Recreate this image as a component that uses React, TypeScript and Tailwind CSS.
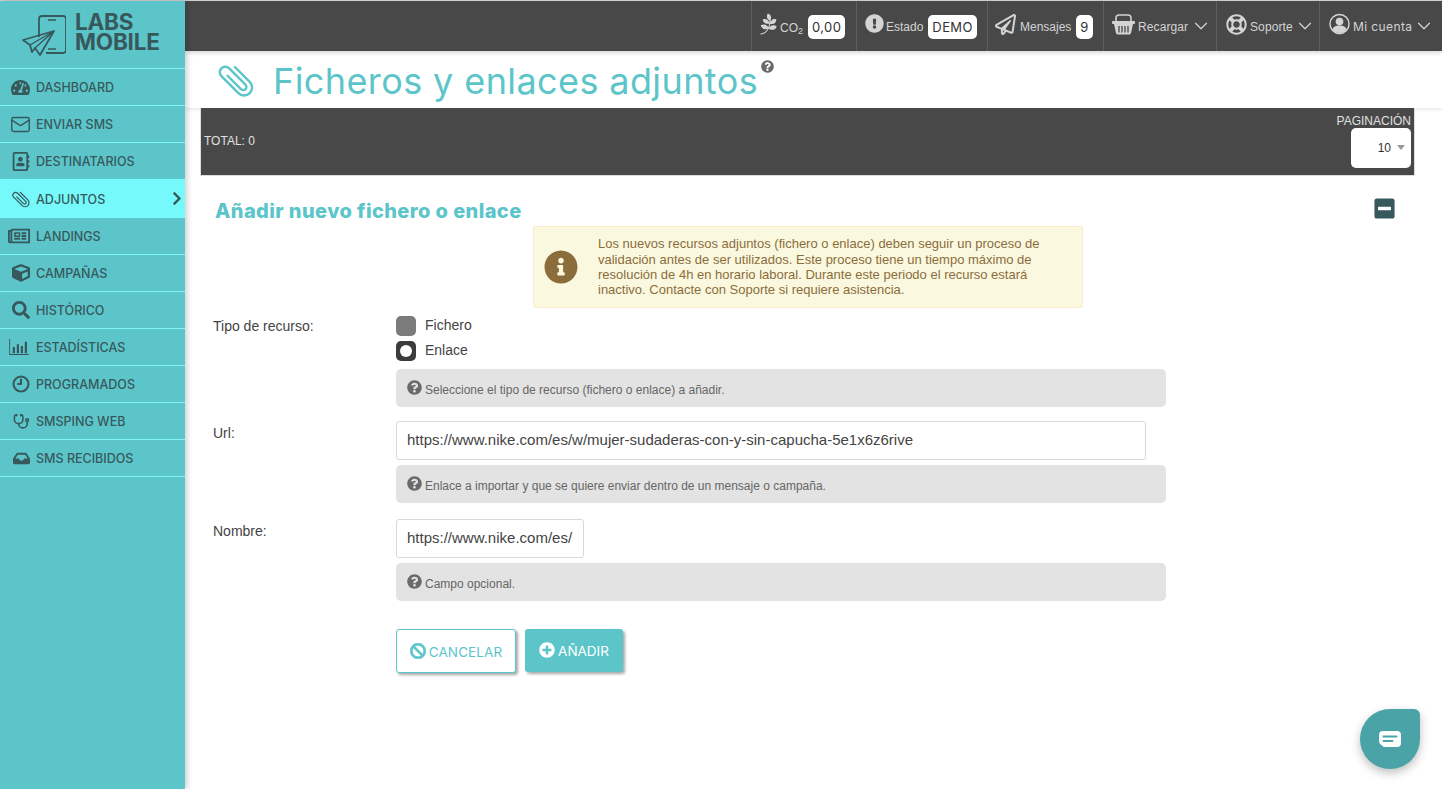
import { ChevronDown, Clock9, Mail, Stethoscope } from "lucide-react";
import {
  FaPagelines,
  FaExclamationCircle,
  FaRegPaperPlane,
  FaRegLifeRing,
  FaTachometerAlt,
  FaRegAddressBook,
  FaRegNewspaper,
  FaCube,
  FaSearch,
  FaInbox,
  FaChevronRight,
  FaInfoCircle,
  FaQuestionCircle,
  FaBan,
  FaPlusCircle,
  FaMinusSquare,
} from "react-icons/fa";

function ClipIcon({ className = "" }: { className?: string }) {
  return (
    <svg viewBox="0 0 36 36" fill="none" stroke="currentColor" strokeWidth="2.4" strokeLinecap="round" className={className}>
      <g transform="rotate(-45 18 18)">
        <path d="M15 9v19a3.200 3.200 0 0 0 6.400 0V5a5.500 5.500 0 0 0-11 0v24a8 8 0 0 0 16 0V8" />
      </g>
    </svg>
  );
}

function BarsIcon({ className = "" }: { className?: string }) {
  return (
    <svg viewBox="0 0 22 18" fill="currentColor" className={className}>
      <path d="M0 0h1v17h21v1H0z" />
      <path d="M4 9h2.500v7H4zM8.500 6H11v10H8.500zM13 8h2.500v8H13zM17.500 3H20v13h-2.500z" />
    </svg>
  );
}

const menu = [
  { label: "DASHBOARD", icon: <FaTachometerAlt className="h-[19px] w-[19px]" /> },
  { label: "ENVIAR SMS", icon: <Mail className="h-[21px] w-[21px] -mr-px" strokeWidth={1.6} /> },
  { label: "DESTINATARIOS", icon: <FaRegAddressBook className="h-[19px] w-[18px]" /> },
  { label: "ADJUNTOS", icon: <ClipIcon className="h-[18px] w-[18px]" />, active: true },
  { label: "LANDINGS", icon: <FaRegNewspaper className="h-[20px] w-[22px]" /> },
  { label: "CAMPAÑAS", icon: <FaCube className="h-[18px] w-[18px]" /> },
  { label: "HISTÓRICO", icon: <FaSearch className="h-[18px] w-[18px]" /> },
  { label: "ESTADÍSTICAS", icon: <BarsIcon className="h-[16px] w-[22px]" /> },
  { label: "PROGRAMADOS", icon: <Clock9 className="h-[18px] w-[18px]" strokeWidth={2.8} /> },
  { label: "SMSPING WEB", icon: <Stethoscope className="h-[17px] w-[17px]" strokeWidth={2.2} /> },
  { label: "SMS RECIBIDOS", icon: <FaInbox className="h-[17px] w-[17px]" /> },
];

function Logo() {
  return (
    <div className="flex h-[67px] items-center pl-[22px]">
      <svg width="44" height="42" viewBox="0 0 44 42" fill="none" stroke="#37595c" strokeWidth="1.800" strokeLinejoin="round" className="mt-[2px] shrink-0">
        <path d="M17 22V4a3 3 0 0 1 3-3h21a3 3 0 0 1 3 3v31a3 3 0 0 1-3 3H24" />
        <path d="M26 5h8M26 34h8" strokeWidth="1.300" />
        <path d="M1 25 32 16 18 40 13 33 10 37 8 30Z" />
        <path d="M8 30 32 16M13 33 32 16" strokeWidth="1.400" />
      </svg>
      <div className="mb-[5px] ml-[9px] font-['Inter',sans-serif] text-[22.5px] font-bold leading-[20px] tracking-[-0.2px] text-[#37595c]">
        LABS
        <br />
        MOBILE
      </div>
    </div>
  );
}

function Sidebar() {
  return (
    <aside className="relative z-20 w-[185px] shrink-0 bg-[#5cc5c9] shadow-[2px_0_6px_rgba(0,0,0,0.2)]">
      <Logo />
      <nav className="border-t border-[#7ff5f8] font-['Inter',sans-serif] text-[12.5px] font-medium text-[#37595c]">
        {menu.map((item) =>
          item.active ? (
            <a key={item.label} className="-mt-px flex h-[39px] items-center bg-[#75f9fb]">
              <span className="flex w-[36px] shrink-0 justify-end pr-[6px]">{item.icon}</span>
              <span className="flex-1 pt-[4px]">{item.label}</span>
              <FaChevronRight className="mr-[3px] h-[15px] w-[10px]" />
            </a>
          ) : (
            <a key={item.label} className="flex h-[37px] items-center border-b border-[#7ff5f8]">
              <span className="flex w-[36px] shrink-0 justify-end pr-[6px]">{item.icon}</span>
              <span className="pt-[2px]">{item.label}</span>
            </a>
          ),
        )}
      </nav>
    </aside>
  );
}

function BasketIcon() {
  return (
    <svg width="23" height="22" viewBox="0 0 23 22" className="mb-[4px] shrink-0" fill="#d4d4d4">
      <path d="M4 9V5a3 3 0 0 1 3-3h9a3 3 0 0 1 3 3v4" fill="none" stroke="#d4d4d4" strokeWidth="1.500" />
      <rect x="0" y="8" width="23" height="3" rx="1" />
      <path d="M2 11h19l-2 9a2 2 0 0 1-2 1.500H6A2 2 0 0 1 4 20z" />
      <path d="M7 13v6.500M10 13v6.500M13 13v6.500M16 13v6.500" stroke="#484848" strokeWidth="1.300" />
    </svg>
  );
}

function UserIcon() {
  return (
    <svg width="21" height="22" viewBox="0 0 22 22" className="mb-[4px] shrink-0" fill="#d4d4d4">
      <circle cx="11" cy="11" r="10" fill="none" stroke="#d4d4d4" strokeWidth="1.500" />
      <circle cx="11" cy="8.500" r="4" />
      <path d="M3.500 17c1-3.500 3.500-4.500 7.500-4.500s6.500 1 7.500 4.500a10 10 0 0 1-15 0z" />
    </svg>
  );
}

function TopItem({ children, className = "" }: { children: React.ReactNode; className?: string }) {
  return (
    <div className={`flex h-full items-center border-l border-[#5e5e5e] text-[12px] text-[#d4d4d4] ${className}`}>
      {children}
    </div>
  );
}

function Badge({ children }: { children: React.ReactNode }) {
  return (
    <span className="ml-[5px] mt-[2px] rounded-[5px] bg-white px-[4px] py-[3px] font-['Inter',sans-serif] text-[13px] leading-[18px] tracking-[0.4px] text-[#333]">
      {children}
    </span>
  );
}

function Topbar() {
  return (
    <header className="relative z-10 flex h-[50px] justify-end bg-[#484848] pr-[3px] shadow-[0_2px_4px_rgba(0,0,0,0.15)]">
      <TopItem className="w-[105px] pl-[7px]">
        <FaPagelines className="mb-[5px] h-[22px] w-[19px]" />
        <span className="ml-[2px] mt-[4px]">
          CO<sub className="text-[9px]">2</sub>
        </span>
        <Badge>0,00</Badge>
      </TopItem>
      <TopItem className="w-[131px] pl-[8px]">
        <FaExclamationCircle className="mb-[5px] h-[19px] w-[19px]" />
        <span className="ml-[2px] mt-[2px]">Estado</span>
        <Badge>DEMO</Badge>
      </TopItem>
      <TopItem className="w-[116px] pl-[7px]">
        <FaRegPaperPlane className="mb-[4px] h-[21px] w-[21px]" />
        <span className="ml-[4px] mt-[2px]">Mensajes</span>
        <Badge>9</Badge>
      </TopItem>
      <TopItem className="w-[113px] pl-[8px]">
        <BasketIcon />
        <span className="ml-[3px] mt-[2px] tracking-[0.1px]">Recargar</span>
        <ChevronDown className="ml-[2px] h-[22px] w-[22px]" strokeWidth={1.300} />
      </TopItem>
      <TopItem className="w-[103px] pl-[9px]">
        <FaRegLifeRing className="mb-[4px] h-[21px] w-[21px]" />
        <span className="ml-[3px] mt-[2px] tracking-[0.1px]">Soporte</span>
        <ChevronDown className="ml-[1px] h-[22px] w-[22px]" strokeWidth={1.300} />
      </TopItem>
      <TopItem className="w-[120px] pl-[9px]">
        <UserIcon />
        <span className="ml-[3px] mt-[2px] font-['Inter',sans-serif] tracking-[0.4px]">Mi cuenta</span>
        <ChevronDown className="ml-[1px] h-[22px] w-[22px]" strokeWidth={1.300} />
      </TopItem>
    </header>
  );
}

function Help({ children }: { children: React.ReactNode }) {
  return (
    <div className="mt-[5px] flex h-[38px] w-[770px] items-center rounded-[5px] bg-[#e3e3e3] pl-[11px] text-[12px] text-[#666]">
      <FaQuestionCircle className="mb-[2px] mr-[3px] h-[15px] w-[15px] text-[#6a6a6a]" />
      <span className="pt-[3px]">{children}</span>
    </div>
  );
}

function Row({ label, className = "", labelClass = "pt-[2px]", children }: { label: string; className?: string; labelClass?: string; children: React.ReactNode }) {
  return (
    <div className={`flex ${className}`}>
      <label className={`w-[183px] shrink-0 text-[14px] leading-[20px] text-[#444] ${labelClass}`}>{label}</label>
      <div>{children}</div>
    </div>
  );
}

function Radio({ label, checked }: { label: string; checked?: boolean }) {
  return (
    <div className="flex h-[25px] items-center">
      {checked ? (
        <span className="flex h-[20px] w-[20px] items-center justify-center rounded-[5px] bg-[#3c3c3c]">
          <span className="h-[12px] w-[12px] rounded-full bg-white" />
        </span>
      ) : (
        <span className="h-[20px] w-[20px] rounded-[5px] bg-[#7b7b7b]" />
      )}
      <span className="ml-[9px] text-[14px] text-[#444]">{label}</span>
    </div>
  );
}

export default function App() {
  return (
    <div className="flex h-screen overflow-hidden bg-[#d2d2d2] pt-px font-['Liberation_Sans',Arial,sans-serif]">
      <Sidebar />
      <main className="relative min-w-0 flex-1 bg-white">
        <Topbar />
        <div className="flex h-[57px] items-center bg-white pl-[33px] shadow-[0_1px_4px_rgba(0,0,0,0.12)]">
          <ClipIcon className="h-[36px] w-[36px] text-[#5cc5c9]" />
          <h1 className="ml-[19px] mt-[2px] font-['Inter',sans-serif] text-[36px] font-normal tracking-[0.4px] text-[#5cc5c9]">
            Ficheros y enlaces adjuntos
          </h1>
          <FaQuestionCircle className="mb-[26px] ml-[3px] h-[13px] w-[13px] text-[#6a6a6a]" />
        </div>

        <div className="ml-[15px] mr-[27px] flex h-[68px] items-center justify-between border-x border-b border-[#dcdcdc] bg-[#484848] pl-[3px] pr-[3px] text-[#e0e0e0]">
          <span className="mb-[2px] text-[12px]">TOTAL: 0</span>
          <div className="mb-[2px] flex flex-col items-end">
            <span className="text-[12px] leading-[14px]">PAGINACIÓN</span>
            <div className="flex h-[40px] w-[60px] items-center justify-end rounded-[5px] bg-white pr-[6px] text-[12px] text-[#333]">
              10
              <span className="ml-[6px] h-0 w-0 border-x-[4px] border-t-[5px] border-x-transparent border-t-[#999]" />
            </div>
          </div>
        </div>

        <div className="pl-[28px] pr-[47px]">
          <div className="flex items-start justify-between pt-[23px]">
            <h2 className="ml-[2px] font-['Inter',sans-serif] text-[20px] font-extrabold leading-[24px] tracking-[0.4px] text-[#5cc5c9]">
              Añadir nuevo fichero o enlace
            </h2>
            <FaMinusSquare className="-mt-[2px] h-[23px] w-[21px] text-[#37595c]" />
          </div>

          <div className="ml-[320px] mt-[3px] flex h-[82px] w-[550px] items-center rounded-[3px] border border-[#faebcc] bg-[#fbf8e0] text-[#8a6d3b]">
            <FaInfoCircle className="ml-[10px] h-[34px] w-[34px] shrink-0" />
            <p className="ml-[20px] pr-[24px] text-[13px] leading-[15.3px]">
              Los nuevos recursos adjuntos (fichero o enlace) deben seguir un proceso de validación antes de ser utilizados. Este proceso tiene un tiempo máximo de resolución de 4h en horario laboral. Durante este periodo el recurso estará inactivo. Contacte con Soporte si requiere asistencia.
            </p>
          </div>

          <Row label="Tipo de recurso:" className="mt-[5px]" labelClass="pt-[3px]">
            <div className="pb-[1px]">
              <Radio label="Fichero" />
              <Radio label="Enlace" checked />
            </div>
            <Help>Seleccione el tipo de recurso (fichero o enlace) a añadir.</Help>
          </Row>

          <Row label="Url:" className="mt-[14px]">
            <div className="flex h-[39px] w-[750px] items-center rounded-[3px] border border-[#d9d9d9] bg-white pl-[10px] text-[15px] text-[#444]">
              https://www.nike.com/es/w/mujer-sudaderas-con-y-sin-capucha-5e1x6z6rive
            </div>
            <Help>Enlace a importar y que se quiere enviar dentro de un mensaje o campaña.</Help>
          </Row>

          <Row label="Nombre:" className="mt-[16px]">
            <div className="flex h-[39px] w-[188px] items-center overflow-hidden whitespace-nowrap rounded-[3px] border border-[#d9d9d9] bg-white pl-[10px] text-[15px] text-[#444]">
              https://www.nike.com/es/
            </div>
            <Help>Campo opcional.</Help>
            <div className="mt-[28px] flex items-start gap-[9px]">
              <button className="flex h-[44px] w-[120px] items-center justify-center rounded-[3px] border border-[#5cc5c9] bg-white font-['Inter',sans-serif] text-[13.5px] font-normal tracking-[0.1px] text-[#5cc5c9] shadow-[2px_2px_3px_rgba(0,0,0,0.35)]">
                <FaBan className="mr-[3px] h-[16px] w-[16px]" strokeWidth={24} />
                <span className="pt-[2px]">CANCELAR</span>
              </button>
              <button className="flex h-[43px] w-[98px] items-center justify-center rounded-[3px] bg-[#5cc5c9] font-['Inter',sans-serif] text-[13.5px] font-normal text-white shadow-[2px_2px_3px_rgba(0,0,0,0.35)]">
                <FaPlusCircle className="mb-[2px] mr-[3px] h-[16px] w-[16px]" />
                <span className="pt-[2px]">AÑADIR</span>
              </button>
            </div>
          </Row>
        </div>

        {/* chat bubble */}
        <button className="absolute bottom-[20px] right-[22px] flex h-[60px] w-[60px] items-center justify-center rounded-[30px] rounded-tr-[6px] bg-[#4aa3a6] shadow-[0_4px_10px_rgba(0,0,0,0.25)]">
          <svg width="24" height="18" viewBox="0 0 24 18">
            <path d="M5 1h14a4 4 0 0 1 4 4v8a4 4 0 0 1-4 4H7c-1 0-2-.5-3-1.500C2 14 1 13 1 11V5a4 4 0 0 1 4-4z" fill="#fff" />
            <path d="M5.500 6.500h13M5.500 11h9" stroke="#4aa3a6" strokeWidth="2" strokeLinecap="round" />
          </svg>
        </button>
      </main>
    </div>
  );
}
